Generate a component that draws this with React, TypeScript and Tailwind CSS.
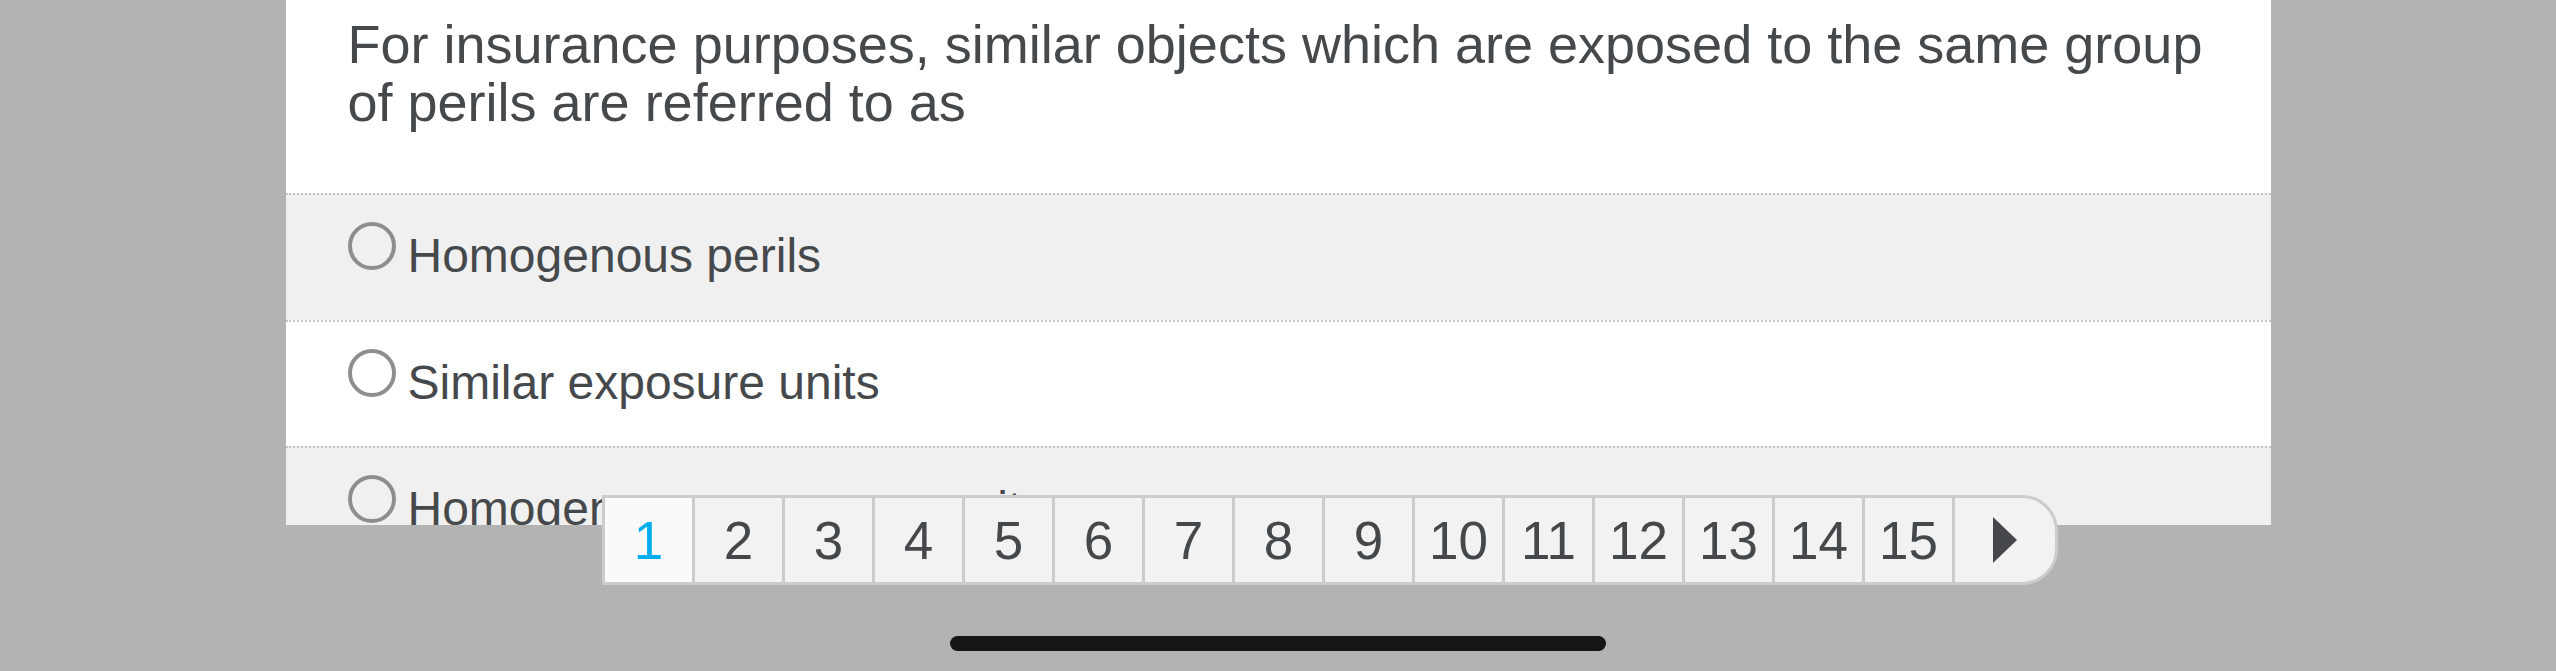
const options = [
  { label: "Homogenous perils", shaded: true },
  { label: "Similar exposure units", shaded: false },
  { label: "Homogeneous exposure units", shaded: true },
];

const pages = Array.from({ length: 15 }, (_, i) => i + 1);

function Radio() {
  return (
    <span className="block w-12 h-12 shrink-0 rounded-full border-4 border-[#8e8e90] bg-transparent" />
  );
}

function Pager() {
  return (
    <div className="absolute left-[602px] top-[495px] flex h-[90px] border-[3px] border-[#c9cdcf] rounded-r-[36px] bg-[#f2f2f2] overflow-hidden">
      {pages.map((p) => (
        <div
          key={p}
          className={
            p === 1
              ? "flex w-[87px] shrink-0 items-center justify-center bg-[#fafafa] text-[53px] leading-none text-[#00aeef]"
              : "flex w-[90px] shrink-0 items-center justify-center border-l-[3px] border-[#c9cdcf] text-[53px] leading-none text-[#45484b]"
          }
        >
          {p}
        </div>
      ))}
      <div className="flex w-[103px] shrink-0 items-center justify-center border-l-[3px] border-[#c9cdcf]">
        <svg width="24" height="46" viewBox="0 0 24 46">
          <polygon points="0,0 24,23 0,46" fill="#45484b" />
        </svg>
      </div>
    </div>
  );
}

export default function App() {
  return (
    <div
      className="relative h-[671px] w-full overflow-hidden bg-[#b3b3b3]"
      style={{ fontFamily: '"Liberation Sans", Arial, sans-serif' }}
    >
      <div className="mx-auto h-[525px] w-[1985px] overflow-hidden bg-white">
        <div className="pl-[62px] pr-[36px] pt-[15px] pb-[62px] text-[54px] leading-[58px] text-[#46494c]">
          For insurance purposes, similar objects which are exposed to the same group of perils are referred to as
        </div>
        {options.map((o) => (
          <div
            key={o.label}
            className={
              o.shaded
                ? "flex h-[126.5px] items-start border-t-2 border-dotted border-[#c6c6c6] bg-[#f0f0f0] pl-[62px] pt-[27px]"
                : "flex h-[126.5px] items-start border-t-2 border-dotted border-[#c6c6c6] bg-white pl-[62px] pt-[27px]"
            }
          >
            <Radio />
            <span className="ml-[12px] mt-[6px] text-[48px] leading-[56px] text-[#46494c]">
              {o.label}
            </span>
          </div>
        ))}
      </div>
      <Pager />
      <div className="absolute left-[950px] top-[636px] h-[15px] w-[656px] rounded-full bg-[#161616]" />
    </div>
  );
}
